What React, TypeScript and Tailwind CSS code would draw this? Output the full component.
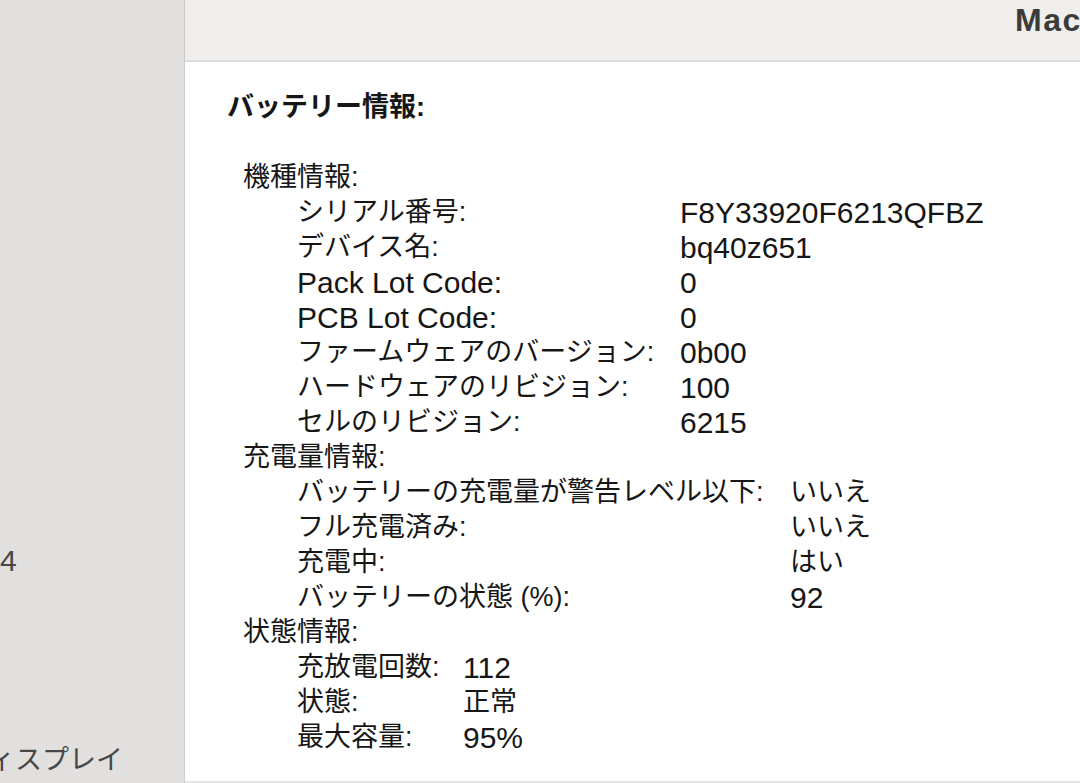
import React from "react";

const jp = "font-['Liberation_Sans','Noto_Sans_CJK_JP',sans-serif]";

function L({ children }: { children: React.ReactNode }) {
  return <span className="text-[30px]">{children}</span>;
}

type Group = {
  title: string;
  cols: string;
  rows: [React.ReactNode, React.ReactNode][];
};

const groups: Group[] = [
  {
    title: "機種情報:",
    cols: "grid-cols-[383px_1fr]",
    rows: [
      ["シリアル番号:", <L>F8Y33920F6213QFBZ</L>],
      ["デバイス名:", <L>bq40z651</L>],
      [<L>Pack Lot Code:</L>, <L>0</L>],
      [<L>PCB Lot Code:</L>, <L>0</L>],
      ["ファームウェアのバージョン:", <L>0b00</L>],
      ["ハードウェアのリビジョン:", <L>100</L>],
      ["セルのリビジョン:", <L>6215</L>],
    ],
  },
  {
    title: "充電量情報:",
    cols: "grid-cols-[493px_1fr]",
    rows: [
      ["バッテリーの充電量が警告レベル以下:", "いいえ"],
      ["フル充電済み:", "いいえ"],
      ["充電中:", "はい"],
      ["バッテリーの状態 (%):", <L>92</L>],
    ],
  },
  {
    title: "状態情報:",
    cols: "grid-cols-[166px_1fr]",
    rows: [
      ["充放電回数:", <L>112</L>],
      ["状態:", "正常"],
      ["最大容量:", <L>95%</L>],
    ],
  },
];

export default function App() {
  return (
    <div className={`flex h-[783px] w-[1080px] overflow-hidden bg-white text-[27px] ${jp}`}>
      {/* Sidebar */}
      <aside className="flex w-[185px] shrink-0 flex-col overflow-hidden border-r border-[#cfcdcc] bg-[#e2e0df] text-[#474747]">
        <div className="mt-[543px] h-[35px] leading-[35px]">
          <L>4</L>
        </div>
        <div className="-ml-[12px] mt-[165px] h-[35px] whitespace-nowrap leading-[35px]">ィスプレイ</div>
      </aside>

      <main className="flex min-w-0 flex-1 flex-col border-b-2 border-[#e4e4e4]">
        {/* Title bar */}
        <div className="flex h-[62px] shrink-0 items-start overflow-hidden border-b-2 border-[#dddcdb] bg-[#efeeed] pl-[830px] pt-[3px]">
          <span className="whitespace-nowrap text-[32px] font-bold leading-[35px] tracking-[1.5px] text-[#3b3b3b]">MacBook Pro</span>
        </div>

        {/* Content */}
        <div className="flex-1 overflow-hidden pl-[42px] pt-[28px] text-[#161616]">
          <div className="h-[35px] whitespace-nowrap font-bold leading-[35px]">バッテリー情報:</div>
          <div className="h-[35px]" />
          {groups.map((g) => (
            <div key={g.title}>
              <div className="ml-[16px] h-[35px] whitespace-nowrap leading-[35px]">{g.title}</div>
              <div className={`ml-[70px] grid ${g.cols}`}>
                {g.rows.map(([label, value], i) => (
                  <React.Fragment key={i}>
                    <div className="h-[35px] whitespace-nowrap leading-[35px]">{label}</div>
                    <div className="h-[35px] whitespace-nowrap leading-[35px]">{value}</div>
                  </React.Fragment>
                ))}
              </div>
            </div>
          ))}
        </div>
      </main>
    </div>
  );
}
